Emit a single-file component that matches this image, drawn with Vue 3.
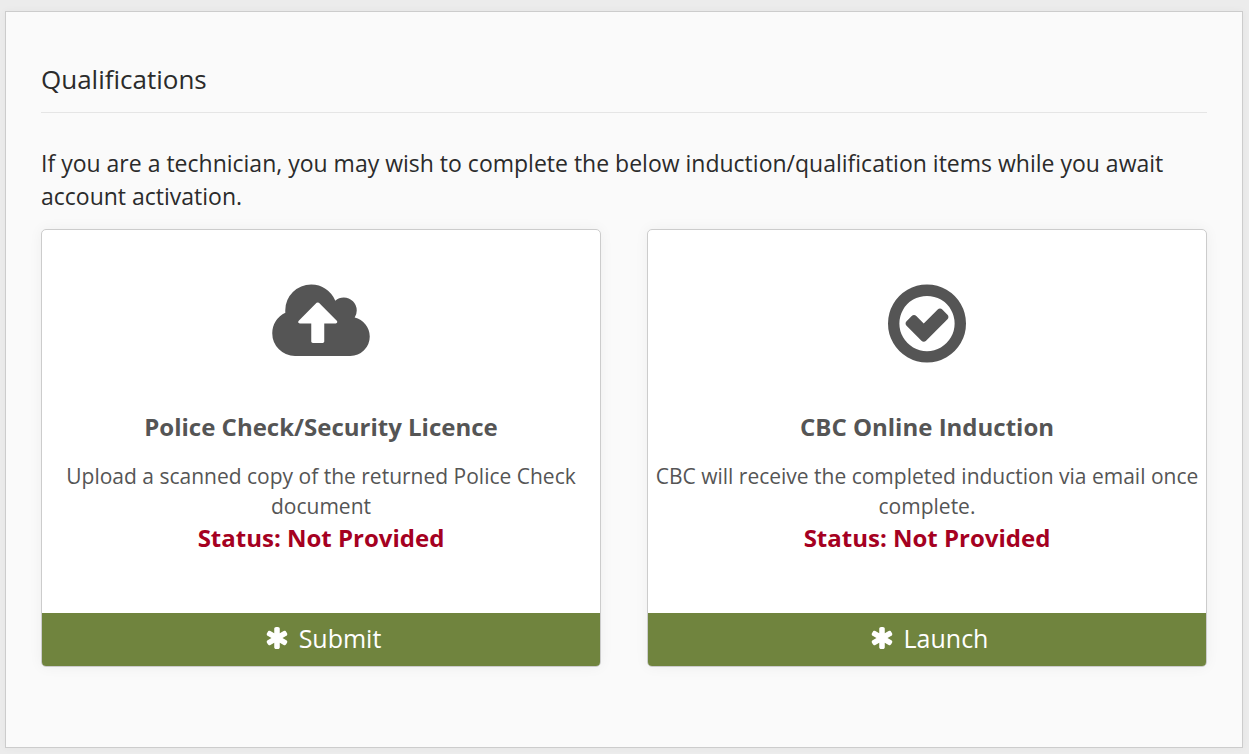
<template>
  <main class="panel">
    <h1>Qualifications</h1>
    <p class="intro">
      If you are a technician, you may wish to complete the below induction/qualification items while you await
      account activation.
    </p>
    <div class="cards">
      <section v-for="item in items" :key="item.title" class="card">
        <div class="card-body">
          <svg v-if="item.icon === 'upload'" class="icon" width="98" height="91" viewBox="0 0 1920 1792" aria-hidden="true">
            <path fill="currentColor" d="M1280 864q0-14-9-23L919 489q-9-9-23-9t-23 9L522 840q-10 12-10 24 0 14 9 23t23 9h224v352q0 13 9.500 22.500t22.500 9.500h192q13 0 22.500-9.500t9.500-22.500V896h224q13 0 22.500-9.500t9.500-22.500zm640 288q0 159-112.500 271.500T1536 1536H448q-185 0-316.500-131.500T0 1088q0-130 70-240t188-165q-2-30-2-43 0-212 150-362t362-150q156 0 285.500 87T1242 446q71-62 166-62 106 0 181 75t75 181q0 76-41 138 130 31 213.500 135.500T1920 1152z" />
          </svg>
          <svg v-else class="icon" width="78" height="91" viewBox="0 0 1536 1792" aria-hidden="true">
            <path fill="currentColor" d="M1171 813l-422 422q-19 19-45 19t-45-19L365 941q-19-19-19-45t19-45l102-102q19-19 45-19t45 19l147 147 275-275q19-19 45-19t45 19l102 102q19 19 19 45t-19 45zM1312 896q0-148-73-273t-198-198-273-73-273 73-198 198-73 273 73 273 198 198 273 73 273-73 198-198 73-273zm224 0q0 209-103 385.500T1153.500 1561 768 1664t-385.500-103T103 1281.500 0 896t103-385.500T382.500 231 768 128t385.500 103T1433 510.500 1536 896z" />
          </svg>
          <h2>{{ item.title }}</h2>
          <p class="text">{{ item.text }}</p>
          <p class="status">Status: Not Provided</p>
        </div>
        <button type="button">
          <svg width="24" height="26" viewBox="64 0 1664 1792" aria-hidden="true">
            <path fill="currentColor" d="M1546 1050q46 26 59.500 77.500T1593 1225l-64 110q-26 46-77.500 59.500T1354 1382l-266-153v307q0 52-38 90t-90 38H832q-52 0-90-38t-38-90v-307l-266 153q-46 26-97.500 12.500T263 1335l-64-110q-26-46-12.500-97.500T246 1050l266-154-266-154q-46-26-59.500-77.500T199 567l64-110q26-46 77.500-59.500T438 410l266 153V256q0-52 38-90t90-38h128q52 0 90 38t38 90v307l266-153q46-26 97.500-12.500T1529 457l64 110q26 46 12.500 97.500T1546 742l-266 154z" />
          </svg>
          {{ item.action }}
        </button>
      </section>
    </div>
  </main>
</template>

<script setup>
const items = [
  {
    icon: 'upload',
    title: 'Police Check/Security Licence',
    text: 'Upload a scanned copy of the returned Police Check document',
    action: 'Submit',
  },
  {
    icon: 'check',
    title: 'CBC Online Induction',
    text: 'CBC will receive the completed induction via email once complete.',
    action: 'Launch',
  },
]
</script>

<style>
body { background: #ececec; }
</style>

<style scoped>
.panel {
  box-sizing: border-box;
  margin: 11px 6px 6px 5px;
  padding: 47px 35px 80px;
  border: 1px solid #ccc;
  background: #fafafa;
  box-shadow: 0 0 8px rgba(0, 0, 0, 0.04);
  color: #2b2b2b;
  font-family: "Open Sans", sans-serif;
}
h1 {
  margin: 0 0 34px;
  padding-bottom: 13px;
  border-bottom: 1px solid #e5e5e5;
  font-size: 26px;
  font-weight: 400;
  line-height: 40px;
}
.intro { margin: 0 0 16px; font-size: 23px; line-height: 33px; }
.cards { display: grid; grid-template-columns: 1fr 1fr; gap: 46px; }
.card {
  display: flex;
  flex-direction: column;
  overflow: hidden;
  border: 1px solid #ccc;
  border-radius: 5px;
  background: #fff;
  box-shadow: 0 0 14px rgba(0, 0, 0, 0.05);
  color: #555;
  text-align: center;
}
.card-body { flex: 1; padding: 48px 6px 58px; }
.icon { display: block; margin: 0 auto; }
h2 { margin: 40px 0 16px; font-size: 24px; font-weight: 700; line-height: 36px; }
.text { margin: 0; font-size: 21px; line-height: 30px; }
.status { margin: 0; color: #a50021; font-size: 24px; font-weight: 700; line-height: 34px; }
button {
  display: flex;
  align-items: center;
  justify-content: center;
  gap: 10px;
  padding: 7px 8px 10px 12px;
  border: 0;
  background: #70843e;
  color: #fff;
  font-family: inherit;
  font-size: 25px;
  line-height: 36px;
  cursor: pointer;
}
</style>
